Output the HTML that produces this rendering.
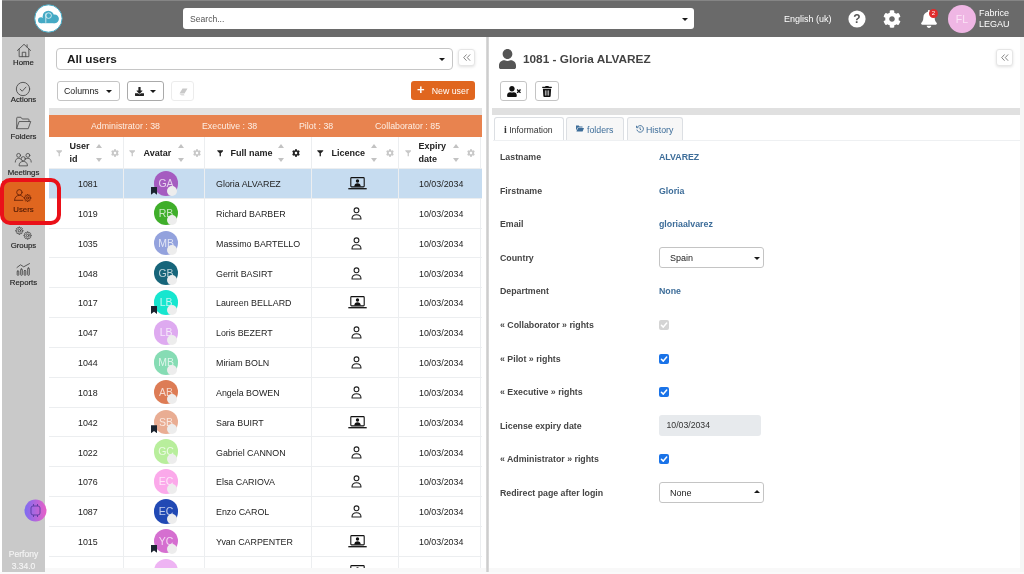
<!DOCTYPE html>
<html lang="en">
<head>
<meta charset="utf-8">
<title>Perfony - Users</title>
<style>
*{box-sizing:border-box;margin:0;padding:0}
html,body{width:1024px;height:574px;overflow:hidden;background:#fff}
body{position:relative;font-family:"Liberation Sans",Arial,sans-serif;color:#222;font-size:9px}
#wrap{position:absolute;left:0;top:0;width:1024px;height:574px;overflow:hidden;will-change:transform}
.abs{position:absolute}
#hdr{left:2px;top:0;width:1022px;height:37px;background:#6a6a6a;border-top:1px solid #858585}
#side{left:2px;top:37px;width:43px;height:535px;background:#c9c9c9}
#search{left:183px;top:8px;width:511px;height:21px;background:#fff;border-radius:3px}
#search span{position:absolute;left:7px;top:5.6px;font-size:8.6px;color:#555}
.caret{width:0;height:0;border-left:3.3px solid transparent;border-right:3.3px solid transparent;border-top:3.8px solid #1a1a1a;position:absolute}
.caretup{width:0;height:0;border-left:3.3px solid transparent;border-right:3.3px solid transparent;border-bottom:3.8px solid #1a1a1a;position:absolute}
.hw{position:absolute;color:#fff;font-size:9.5px;white-space:nowrap}
.nav{position:absolute;left:2px;width:43px;text-align:center;font-size:7.8px;color:#1e1e1e;-webkit-text-stroke:0.15px currentColor}
.btn{position:absolute;border:1px solid #c4c4c4;border-radius:3px;background:#fff}
.lbl{position:absolute;left:500px;font-weight:bold;font-size:8.8px;color:#454545;white-space:nowrap}
.val{position:absolute;left:659px;font-weight:bold;font-size:8.8px;color:#3d6d99;white-space:nowrap}
.th{position:absolute;top:137px;height:31px;border-right:1px solid #eceef0;font-weight:bold;font-size:9px;color:#222;line-height:13px}
.row{position:absolute;left:49px;width:433px;border-bottom:1px solid #eceef0;font-size:9px;color:#222}
.row .c{position:absolute;top:0;height:100%;border-right:1px solid #eceef0}
.row .t{position:absolute;white-space:nowrap}
.av{position:absolute;left:105px;width:24.5px;height:24.5px;border-radius:50%;color:rgba(255,255,255,.72);font-size:10.5px;text-align:center;line-height:24px}
.av i{position:absolute;left:13px;top:14.6px;width:10px;height:10px;border-radius:50%;background:#ededed;display:block}
.bm{position:absolute;left:101px;width:6px;height:8px;background:#1b2430;clip-path:polygon(0 0,100% 0,100% 100%,50% 72%,0 100%)}
.chk{position:absolute;left:659px;width:10px;height:10px;border-radius:2px;background:#1a73e8}
.chk svg{position:absolute;left:0;top:0}
.ic{position:absolute}
</style>
</head>
<body>
<div id="wrap">
<div id="hdr" class="abs"></div>
<svg class="ic" style="left:34px;top:4px" width="29" height="29" viewBox="0 0 29 29">
<circle cx="14.400" cy="14.500" r="13.700" fill="#fff" stroke="#45aac5" stroke-width="1"/>
<g fill="#45aac5"><circle cx="14.300" cy="12.300" r="5.600"/><circle cx="20.500" cy="14.800" r="4.400"/><circle cx="7" cy="16.200" r="3"/><rect x="7" y="14" width="13.500" height="5.200"/></g>
<circle cx="14.600" cy="11.600" r="2.800" fill="none" stroke="#fff" stroke-width="0.700"/>
<path d="M11.800 9.500v9.300" stroke="#fff" stroke-width="0.700"/>
</svg>
<div id="search" class="abs"><span>Search...</span><div class="caret" style="left:499px;top:9.5px"></div></div>
<div class="hw" style="left:784px;top:13.7px;font-size:9px">English (uk)</div>
<svg class="ic" style="left:848px;top:9.5px" width="18" height="18" viewBox="0 0 18 18"><circle cx="9" cy="9" r="8.6" fill="#fff"/>
<text x="9" y="13.2" text-anchor="middle" font-family="Liberation Sans, Arial, sans-serif" font-weight="bold" font-size="12" fill="#555">?</text></svg>
<svg class="ic" style="left:883px;top:9.5px" width="18" height="18" viewBox="0 0 512 512"><path fill="#fff" d="M487.4 315.7l-42.6-24.6c4.3-23.2 4.3-47 0-70.200l42.600-24.600c4.900-2.800 7.100-8.600 5.500-14-11.100-35.600-30-67.800-54.700-94.600-3.800-4.100-10-5.100-14.800-2.300L380.800 110c-17.900-15.400-38.500-27.300-60.800-35.100V25.800c0-5.600-3.900-10.500-9.400-11.700-36.700-8.200-74.300-7.800-109.200 0-5.500 1.200-9.400 6.100-9.400 11.700V75c-22.200 7.900-42.800 19.800-60.800 35.100L88.700 85.500c-4.900-2.800-11-1.900-14.800 2.300-24.700 26.700-43.600 58.900-54.700 94.600-1.700 5.400.6 11.200 5.500 14L67.300 221c-4.300 23.200-4.300 47 0 70.200l-42.600 24.600c-4.900 2.800-7.100 8.600-5.500 14 11.100 35.600 30 67.800 54.700 94.600 3.800 4.100 10 5.100 14.800 2.300l42.600-24.600c17.900 15.400 38.500 27.300 60.800 35.100v49.200c0 5.600 3.900 10.500 9.400 11.700 36.700 8.200 74.300 7.800 109.200 0 5.500-1.200 9.400-6.100 9.400-11.700v-49.200c22.200-7.900 42.800-19.800 60.800-35.100l42.600 24.600c4.900 2.800 11 1.900 14.800-2.300 24.700-26.700 43.600-58.900 54.700-94.600 1.500-5.500-.7-11.300-5.600-14.100zM256 336c-44.100 0-80-35.900-80-80s35.900-80 80-80 80 35.900 80 80-35.900 80-80 80z"/></svg>
<svg class="ic" style="left:921px;top:9.5px" width="16" height="18" viewBox="0 0 448 512"><path fill="#fff" d="M224 512c35.320 0 63.970-28.650 63.970-64H160.030c0 35.350 28.650 64 63.970 64zm215.390-149.710c-19.320-20.760-55.470-51.990-55.470-154.290 0-77.700-54.480-139.900-127.940-155.160V32c0-17.670-14.320-32-31.980-32s-31.980 14.330-31.980 32v20.840C118.560 68.100 64.080 130.300 64.080 208c0 102.300-36.150 133.530-55.470 154.290-6 6.450-8.660 14.160-8.610 21.710.11 16.400 12.980 32 32.100 32h383.800c19.120 0 32-15.600 32.100-32 .05-7.550-2.610-15.270-8.610-21.710z"/></svg>
<div class="abs" style="left:929px;top:9px;width:9px;height:9px;border-radius:50%;background:#e02c2c;color:#fff;font-size:6px;line-height:9px;text-align:center">2</div>
<div class="abs" style="left:948px;top:4.5px;width:28px;height:28px;border-radius:50%;background:#efb6e4;color:#fbe3f6;font-size:10.5px;line-height:28px;text-align:center">FL</div>
<div class="hw" style="left:979px;top:8px;font-size:9px;line-height:10.9px">Fabrice<br>LEGAU</div>
<div id="side" class="abs"></div>
<div class="abs" style="left:2px;top:181px;width:43px;height:40px;background:#e0661f"></div>
<svg class="ic" style="left:15.5px;top:43px" width="16" height="15" viewBox="0 0 18 17" stroke="#4a4a4a" stroke-width="1" fill="none" stroke-linecap="round" stroke-linejoin="round"><path d="M1.5 8.5L9 1.5l7.500 7"/><path d="M3.500 7v8.500h11V7"/><path d="M7 15.500v-5h4v5"/><path d="M12.500 2v2.500"/></svg>
<div class="nav" style="top:58.4px">Home</div>
<svg class="ic" style="left:15px;top:81.2px" width="16" height="16" viewBox="0 0 18 18" stroke="#4a4a4a" stroke-width="1" fill="none" stroke-linecap="round" stroke-linejoin="round"><circle cx="9" cy="9" r="7.500"/><path d="M5.800 9.200l2.300 2.300 4.200-4.600"/></svg>
<div class="nav" style="top:95px">Actions</div>
<svg class="ic" style="left:14.7px;top:116.3px" width="17" height="13.6" viewBox="0 0 20 16" stroke="#4a4a4a" stroke-width="1" fill="none" stroke-linecap="round" stroke-linejoin="round"><path d="M2 14.500V2.500a1 1 0 0 1 1-1h4l1.500 2h7a1 1 0 0 1 1 1v2"/><path d="M2 14.500l2.800-8h13.700l-2.800 8z"/></svg>
<div class="nav" style="top:131.5px">Folders</div>
<svg class="ic" style="left:14px;top:152.3px" width="18.5" height="14.3" viewBox="0 0 22 17" stroke="#4a4a4a" stroke-width="1" fill="none" stroke-linecap="round" stroke-linejoin="round"><circle cx="5.500" cy="4" r="2.300"/><circle cx="16.500" cy="4" r="2.300"/><circle cx="11" cy="8" r="2.500"/><path d="M1.500 12c0-3 1.800-4.500 4-4.500 1 0 1.900.3 2.600.9"/><path d="M20.500 12c0-3-1.800-4.500-4-4.500-1 0-1.900.3-2.600.9"/><path d="M6 16c0-3.200 2.200-4.800 5-4.800s5 1.600 5 4.800z"/></svg>
<div class="nav" style="top:168.2px">Meetings</div>
<svg class="ic" style="left:13.3px;top:187.2px" width="22" height="16" viewBox="0 0 22 16" fill="none" stroke="#6a2408" stroke-width="0.9" stroke-linecap="round" stroke-linejoin="round"><circle cx="6.4" cy="5.3" r="2.7"/><path d="M1.600 13.300c0-3.300 2-4.900 4.800-4.900 1.700 0 3.100.6 3.900 1.800M1.600 13.300h8.200"/><path d="M17.13 10.42 L18.06 10.49 L18.06 11.51 L17.13 11.58 L16.80 12.38 L17.41 13.08 L16.68 13.81 L15.98 13.20 L15.18 13.53 L15.11 14.46 L14.09 14.46 L14.02 13.53 L13.22 13.20 L12.52 13.81 L11.79 13.08 L12.40 12.38 L12.07 11.58 L11.14 11.51 L11.14 10.49 L12.07 10.42 L12.40 9.62 L11.79 8.92 L12.52 8.19 L13.22 8.80 L14.02 8.47 L14.09 7.54 L15.11 7.54 L15.18 8.47 L15.98 8.80 L16.68 8.19 L17.41 8.92 L16.80 9.62z"/><circle cx="14.600" cy="11" r="1.100"/></svg>
<div class="nav" style="top:204.8px;color:#4f1a05">Users</div>
<svg class="ic" style="left:13px;top:225px" width="22" height="16" viewBox="0 0 22 16" fill="none" stroke="#4a4a4a" stroke-width="0.9" stroke-linecap="round" stroke-linejoin="round"><path d="M9.03 5.10 L10.06 5.16 L10.06 6.24 L9.03 6.30 L8.69 7.13 L9.37 7.90 L8.60 8.67 L7.83 7.99 L7.00 8.33 L6.94 9.36 L5.86 9.36 L5.80 8.33 L4.97 7.99 L4.20 8.67 L3.43 7.90 L4.11 7.13 L3.77 6.30 L2.74 6.24 L2.74 5.16 L3.77 5.10 L4.11 4.27 L3.43 3.50 L4.20 2.73 L4.97 3.41 L5.80 3.07 L5.86 2.04 L6.94 2.04 L7.00 3.07 L7.83 3.41 L8.60 2.73 L9.37 3.50 L8.69 4.27z"/><circle cx="6.400" cy="5.700" r="1.200"/><path d="M17.23 9.90 L18.26 9.96 L18.26 11.04 L17.23 11.10 L16.89 11.93 L17.57 12.70 L16.80 13.47 L16.03 12.79 L15.20 13.13 L15.14 14.16 L14.06 14.16 L14.00 13.13 L13.17 12.79 L12.40 13.47 L11.63 12.70 L12.31 11.93 L11.97 11.10 L10.94 11.04 L10.94 9.96 L11.97 9.90 L12.31 9.07 L11.63 8.30 L12.40 7.53 L13.17 8.21 L14.00 7.87 L14.06 6.84 L15.14 6.84 L15.20 7.87 L16.03 8.21 L16.80 7.53 L17.57 8.30 L16.89 9.07z"/><circle cx="14.600" cy="10.500" r="1.200"/></svg>
<div class="nav" style="top:241.3px">Groups</div>
<svg class="ic" style="left:16px;top:263px" width="15" height="13" viewBox="0 0 15 13" fill="none" stroke="#4a4a4a" stroke-width="0.9" stroke-linecap="round" stroke-linejoin="round"><path d="M1 4.500l3.500-2.700 3.200 2L13.500 0.600"/><rect x="1.200" y="8" width="1.600" height="4.300" rx="0.600"/><rect x="4.700" y="6" width="1.600" height="6.300" rx="0.600"/><rect x="8.200" y="7.500" width="1.600" height="4.800" rx="0.600"/><rect x="11.700" y="5" width="1.600" height="7.300" rx="0.600"/></svg>
<div class="nav" style="top:277.8px">Reports</div>
<div class="abs" style="left:-0.5px;top:177.7px;width:61px;height:47.3px;border:4px solid #ea1019;border-radius:10px;z-index:50"></div>
<svg class="ic" style="left:24px;top:498.5px" width="23" height="23" viewBox="0 0 23 23"><defs><linearGradient id="pg" x1="0" y1="0" x2="1" y2="0"><stop offset="0" stop-color="#7c6cf2"/><stop offset="1" stop-color="#e860c8"/></linearGradient></defs><circle cx="11.500" cy="11.500" r="11" fill="url(#pg)"/><rect x="7" y="7" width="9" height="9" rx="2" fill="none" stroke="#5a3aa0" stroke-width="0.900"/><path d="M9.500 5v2M13.500 5v2M9.500 16v2M13.500 16v2" stroke="#5a3aa0" stroke-width="0.900"/></svg>
<div class="nav" style="top:547.5px;color:#f4f4f4;font-size:8.5px;line-height:12.4px">Perfony<br>3.34.0</div>
<div class="abs" style="left:56px;top:48px;width:397px;height:22px;border:1px solid #c6c6c6;border-radius:4px;background:#fff"><span style="position:absolute;left:10px;top:2.6px;font-size:11.8px;font-weight:bold;color:#1c1c1c">All users</span><div class="caret" style="left:382px;top:9px"></div></div>
<div class="abs" style="left:457.5px;top:48.5px;width:17px;height:17.5px;border:1px solid #e6e6e6;border-radius:3px;background:#fff;box-shadow:0 1px 3px rgba(0,0,0,.12)"><svg width="8" height="7.2" viewBox="0 0 9 8" style="position:absolute;left:4px;top:4.5px" fill="none" stroke="#666" stroke-width="0.900"><path d="M4 0.500L0.800 4 4 7.500M8 0.500L4.800 4 8 7.500"/></svg></div>
<div class="btn" style="left:56.5px;top:81px;width:63px;height:19.5px"><span style="position:absolute;left:6.5px;top:4.2px;font-size:8.8px;color:#222">Columns</span><div class="caret" style="left:48px;top:7.5px"></div></div>
<div class="btn" style="left:127px;top:81px;width:37px;height:19.5px;border-color:#aaa"><svg width="9" height="9" viewBox="0 0 512 512" style="position:absolute;left:7px;top:5px"><path fill="#222" d="M216 0h80c13.300 0 24 10.700 24 24v168h87.700c17.800 0 26.700 21.500 14.100 34.100L269.700 378.300c-7.500 7.500-19.800 7.500-27.300 0L90.100 226.100c-12.600-12.600-3.700-34.100 14.100-34.100H192V24c0-13.300 10.700-24 24-24zm296 376v112c0 13.300-10.700 24-24 24H24c-13.300 0-24-10.700-24-24V376c0-13.300 10.700-24 24-24h146.700l49 49c20.100 20.100 52.500 20.100 72.600 0l49-49H488c13.300 0 24 10.700 24 24z"/></svg><div class="caret" style="left:22px;top:8px"></div></div>
<div class="btn" style="left:171px;top:81px;width:23px;height:19.5px;border-color:#ececec"><svg width="9" height="8" viewBox="0 0 9 8" style="position:absolute;left:7px;top:6px"><path d="M3.500 0.500h5l-3 5h-5z" fill="#c9c9c9"/><path d="M0.500 6l2 1.500h3l-0.600-1.500z" fill="#dcdcdc"/></svg></div>
<div class="abs" style="left:411px;top:81px;width:64px;height:19.3px;border-radius:3px;background:#e0661f;color:#fff;font-size:9px"><span style="position:absolute;left:6px;top:1.2px;font-weight:bold;font-size:13px">+</span><span style="position:absolute;left:20.7px;top:4.8px;font-size:8.8px">New user</span></div>
<div class="abs" style="left:49px;top:108px;width:433px;height:7px;background:#e3e3e3"></div>
<div class="abs" style="left:49px;top:115px;width:433px;height:22px;background:#e8834f;color:#fff;font-size:9px"></div>
<div class="abs" style="left:91px;top:121px;color:#fdeee4;font-size:8.8px;white-space:nowrap">Administrator : 38</div>
<div class="abs" style="left:202px;top:121px;color:#fdeee4;font-size:8.8px;white-space:nowrap">Executive : 38</div>
<div class="abs" style="left:299px;top:121px;color:#fdeee4;font-size:8.8px;white-space:nowrap">Pilot : 38</div>
<div class="abs" style="left:375px;top:121px;color:#fdeee4;font-size:8.8px;white-space:nowrap">Collaborator : 85</div>
<div class="abs" style="left:49px;top:137px;width:433px;height:32px;background:#fff;border-bottom:1px solid #eceef0"></div>
<div class="abs" style="left:123px;top:137px;width:1px;height:31px;background:#eceef0"></div>
<div class="abs" style="left:204px;top:137px;width:1px;height:31px;background:#eceef0"></div>
<div class="abs" style="left:311px;top:137px;width:1px;height:31px;background:#eceef0"></div>
<div class="abs" style="left:398px;top:137px;width:1px;height:31px;background:#eceef0"></div>
<div class="abs" style="left:480px;top:137px;width:1px;height:31px;background:#eceef0"></div>
<div class="abs" style="left:69.5px;top:140px;font-weight:bold;font-size:9px;line-height:13px;color:#222;white-space:nowrap">User<br>id</div>
<svg class="ic" style="left:55.5px;top:150px" width="6.5" height="6.5" viewBox="0 0 7 7"><path d="M0.300 0.300h6.400v0.900L4.200 3.600v3.100H2.800V3.600L0.300 1.200z" fill="#c8c8c8"/></svg>
<div class="abs" style="left:95.5px;top:143.5px;width:0;height:0;border-left:3.7px solid transparent;border-right:3.7px solid transparent;border-bottom:4.3px solid #c2c2c2"></div><div class="abs" style="left:95.5px;top:157.7px;width:0;height:0;border-left:3.7px solid transparent;border-right:3.7px solid transparent;border-top:4.3px solid #c2c2c2"></div>
<svg class="ic" style="left:110.5px;top:149px" width="8" height="8" viewBox="0 0 512 512"><path fill="#c8c8c8" d="M487.4 315.7l-42.6-24.6c4.3-23.2 4.3-47 0-70.200l42.600-24.600c4.900-2.800 7.100-8.600 5.500-14-11.100-35.600-30-67.800-54.700-94.600-3.800-4.100-10-5.100-14.800-2.300L380.800 110c-17.900-15.400-38.500-27.300-60.800-35.100V25.800c0-5.600-3.900-10.500-9.400-11.700-36.700-8.200-74.300-7.800-109.200 0-5.500 1.200-9.400 6.100-9.400 11.700V75c-22.200 7.900-42.800 19.800-60.800 35.100L88.700 85.500c-4.900-2.800-11-1.900-14.800 2.300-24.700 26.700-43.600 58.900-54.700 94.600-1.700 5.400.6 11.200 5.500 14L67.300 221c-4.300 23.200-4.300 47 0 70.200l-42.600 24.600c-4.900 2.800-7.100 8.600-5.500 14 11.100 35.600 30 67.800 54.700 94.600 3.800 4.100 10 5.100 14.800 2.300l42.600-24.600c17.900 15.400 38.500 27.300 60.800 35.100v49.200c0 5.600 3.900 10.500 9.400 11.700 36.700 8.200 74.300 7.800 109.200 0 5.500-1.200 9.400-6.100 9.400-11.700v-49.200c22.200-7.900 42.800-19.800 60.800-35.100l42.600 24.600c4.900 2.800 11 1.900 14.800-2.300 24.700-26.700 43.600-58.900 54.700-94.600 1.500-5.500-.7-11.300-5.600-14.100zM256 336c-44.100 0-80-35.900-80-80s35.900-80 80-80 80 35.900 80 80-35.900 80-80 80z"/></svg>
<div class="abs" style="left:143.5px;top:147px;font-weight:bold;font-size:9px;line-height:13px;color:#222;white-space:nowrap">Avatar</div>
<svg class="ic" style="left:128.5px;top:150px" width="6.5" height="6.5" viewBox="0 0 7 7"><path d="M0.300 0.300h6.400v0.900L4.200 3.600v3.100H2.800V3.600L0.300 1.200z" fill="#c8c8c8"/></svg>
<div class="abs" style="left:177.5px;top:143.5px;width:0;height:0;border-left:3.7px solid transparent;border-right:3.7px solid transparent;border-bottom:4.3px solid #c2c2c2"></div><div class="abs" style="left:177.5px;top:157.7px;width:0;height:0;border-left:3.7px solid transparent;border-right:3.7px solid transparent;border-top:4.3px solid #c2c2c2"></div>
<svg class="ic" style="left:192.5px;top:149px" width="8" height="8" viewBox="0 0 512 512"><path fill="#c8c8c8" d="M487.4 315.7l-42.6-24.6c4.3-23.2 4.3-47 0-70.200l42.600-24.600c4.900-2.800 7.100-8.600 5.500-14-11.100-35.600-30-67.800-54.700-94.600-3.800-4.100-10-5.100-14.800-2.300L380.800 110c-17.900-15.400-38.500-27.300-60.800-35.100V25.800c0-5.600-3.900-10.500-9.400-11.700-36.700-8.200-74.300-7.800-109.200 0-5.500 1.200-9.400 6.100-9.400 11.700V75c-22.200 7.900-42.800 19.800-60.800 35.100L88.700 85.500c-4.900-2.800-11-1.900-14.800 2.300-24.700 26.700-43.600 58.900-54.700 94.600-1.700 5.400.6 11.200 5.500 14L67.300 221c-4.300 23.200-4.300 47 0 70.200l-42.600 24.600c-4.900 2.800-7.100 8.600-5.500 14 11.100 35.600 30 67.800 54.700 94.600 3.800 4.100 10 5.100 14.800 2.300l42.600-24.600c17.900 15.400 38.500 27.300 60.800 35.100v49.200c0 5.600 3.900 10.500 9.400 11.700 36.700 8.200 74.300 7.800 109.200 0 5.500-1.200 9.400-6.100 9.400-11.700v-49.200c22.200-7.900 42.800-19.800 60.800-35.100l42.600 24.600c4.900 2.800 11 1.900 14.800-2.300 24.700-26.700 43.600-58.900 54.700-94.600 1.500-5.500-.7-11.300-5.600-14.100zM256 336c-44.100 0-80-35.900-80-80s35.900-80 80-80 80 35.900 80 80-35.900 80-80 80z"/></svg>
<div class="abs" style="left:230.5px;top:147px;font-weight:bold;font-size:9px;line-height:13px;color:#222;white-space:nowrap">Full name</div>
<svg class="ic" style="left:216.5px;top:150px" width="6.5" height="6.5" viewBox="0 0 7 7"><path d="M0.300 0.300h6.400v0.900L4.200 3.600v3.100H2.800V3.600L0.300 1.200z" fill="#222"/></svg>
<div class="abs" style="left:277.5px;top:143.5px;width:0;height:0;border-left:3.7px solid transparent;border-right:3.7px solid transparent;border-bottom:4.3px solid #c2c2c2"></div><div class="abs" style="left:277.5px;top:157.7px;width:0;height:0;border-left:3.7px solid transparent;border-right:3.7px solid transparent;border-top:4.3px solid #c2c2c2"></div>
<svg class="ic" style="left:292px;top:149px" width="8" height="8" viewBox="0 0 512 512"><path fill="#222" d="M487.4 315.7l-42.6-24.6c4.3-23.2 4.3-47 0-70.200l42.600-24.600c4.900-2.800 7.100-8.600 5.500-14-11.100-35.600-30-67.800-54.700-94.600-3.800-4.100-10-5.100-14.800-2.300L380.800 110c-17.900-15.400-38.500-27.300-60.800-35.100V25.800c0-5.600-3.900-10.500-9.400-11.700-36.700-8.200-74.300-7.800-109.200 0-5.500 1.200-9.400 6.100-9.400 11.700V75c-22.200 7.900-42.800 19.800-60.800 35.100L88.700 85.500c-4.900-2.800-11-1.900-14.800 2.300-24.700 26.700-43.600 58.900-54.700 94.600-1.700 5.400.6 11.200 5.500 14L67.300 221c-4.300 23.200-4.300 47 0 70.200l-42.600 24.600c-4.900 2.800-7.100 8.600-5.500 14 11.100 35.600 30 67.800 54.700 94.600 3.800 4.100 10 5.100 14.800 2.300l42.600-24.600c17.900 15.400 38.500 27.300 60.800 35.100v49.200c0 5.600 3.900 10.500 9.400 11.700 36.700 8.200 74.300 7.800 109.200 0 5.500-1.200 9.400-6.100 9.400-11.700v-49.200c22.200-7.900 42.800-19.800 60.800-35.100l42.600 24.600c4.900 2.800 11 1.900 14.800-2.300 24.700-26.700 43.600-58.900 54.700-94.600 1.500-5.500-.7-11.300-5.600-14.100zM256 336c-44.100 0-80-35.900-80-80s35.900-80 80-80 80 35.900 80 80-35.900 80-80 80z"/></svg>
<div class="abs" style="left:331.5px;top:147px;font-weight:bold;font-size:9px;line-height:13px;color:#222;white-space:nowrap">Licence</div>
<svg class="ic" style="left:317px;top:150px" width="6.5" height="6.5" viewBox="0 0 7 7"><path d="M0.300 0.300h6.400v0.900L4.200 3.600v3.100H2.800V3.600L0.300 1.200z" fill="#222"/></svg>
<div class="abs" style="left:370.8px;top:143.5px;width:0;height:0;border-left:3.7px solid transparent;border-right:3.7px solid transparent;border-bottom:4.3px solid #c2c2c2"></div><div class="abs" style="left:370.8px;top:157.7px;width:0;height:0;border-left:3.7px solid transparent;border-right:3.7px solid transparent;border-top:4.3px solid #c2c2c2"></div>
<svg class="ic" style="left:386px;top:149px" width="8" height="8" viewBox="0 0 512 512"><path fill="#c8c8c8" d="M487.4 315.7l-42.6-24.6c4.3-23.2 4.3-47 0-70.200l42.600-24.600c4.900-2.800 7.100-8.600 5.500-14-11.100-35.600-30-67.800-54.700-94.600-3.800-4.100-10-5.100-14.800-2.300L380.800 110c-17.900-15.400-38.500-27.300-60.800-35.100V25.800c0-5.600-3.900-10.500-9.400-11.700-36.700-8.200-74.300-7.800-109.200 0-5.500 1.200-9.400 6.100-9.400 11.700V75c-22.200 7.900-42.800 19.800-60.800 35.100L88.700 85.500c-4.900-2.800-11-1.900-14.800 2.300-24.700 26.700-43.600 58.900-54.700 94.600-1.700 5.400.6 11.200 5.500 14L67.300 221c-4.300 23.200-4.300 47 0 70.200l-42.600 24.600c-4.900 2.800-7.100 8.600-5.500 14 11.100 35.600 30 67.800 54.700 94.600 3.800 4.100 10 5.100 14.800 2.300l42.600-24.600c17.900 15.400 38.500 27.300 60.800 35.100v49.200c0 5.600 3.900 10.500 9.400 11.700 36.700 8.200 74.300 7.800 109.200 0 5.500-1.200 9.400-6.100 9.400-11.700v-49.200c22.200-7.900 42.800-19.800 60.800-35.100l42.600 24.600c4.900 2.800 11 1.900 14.800-2.300 24.700-26.700 43.600-58.900 54.700-94.600 1.500-5.500-.7-11.300-5.600-14.100zM256 336c-44.100 0-80-35.900-80-80s35.900-80 80-80 80 35.900 80 80-35.900 80-80 80z"/></svg>
<div class="abs" style="left:418.5px;top:140px;font-weight:bold;font-size:9px;line-height:13px;color:#222;white-space:nowrap">Expiry<br>date</div>
<svg class="ic" style="left:404.5px;top:150px" width="6.5" height="6.5" viewBox="0 0 7 7"><path d="M0.300 0.300h6.400v0.900L4.200 3.600v3.100H2.800V3.600L0.300 1.200z" fill="#c8c8c8"/></svg>
<div class="abs" style="left:452.5px;top:143.5px;width:0;height:0;border-left:3.7px solid transparent;border-right:3.7px solid transparent;border-bottom:4.3px solid #c2c2c2"></div><div class="abs" style="left:452.5px;top:157.7px;width:0;height:0;border-left:3.7px solid transparent;border-right:3.7px solid transparent;border-top:4.3px solid #c2c2c2"></div>
<svg class="ic" style="left:467px;top:149px" width="8" height="8" viewBox="0 0 512 512"><path fill="#c8c8c8" d="M487.4 315.7l-42.6-24.6c4.3-23.2 4.3-47 0-70.200l42.600-24.600c4.900-2.800 7.100-8.600 5.500-14-11.100-35.600-30-67.800-54.700-94.600-3.800-4.100-10-5.100-14.800-2.300L380.800 110c-17.900-15.400-38.500-27.300-60.800-35.100V25.800c0-5.600-3.900-10.500-9.400-11.700-36.700-8.200-74.300-7.800-109.200 0-5.500 1.200-9.400 6.100-9.400 11.700V75c-22.200 7.900-42.800 19.800-60.800 35.100L88.700 85.500c-4.900-2.800-11-1.900-14.800 2.300-24.700 26.700-43.600 58.900-54.700 94.600-1.700 5.400.6 11.200 5.500 14L67.300 221c-4.300 23.200-4.300 47 0 70.200l-42.600 24.600c-4.900 2.800-7.100 8.600-5.500 14 11.100 35.600 30 67.800 54.700 94.600 3.800 4.100 10 5.100 14.800 2.300l42.600-24.600c17.900 15.400 38.500 27.300 60.800 35.100v49.200c0 5.600 3.900 10.500 9.400 11.700 36.700 8.200 74.300 7.800 109.200 0 5.500-1.200 9.400-6.100 9.400-11.700v-49.200c22.200-7.900 42.800-19.800 60.800-35.100l42.600 24.600c4.900 2.800 11 1.900 14.800-2.300 24.700-26.700 43.600-58.900 54.700-94.600 1.500-5.500-.7-11.300-5.600-14.100zM256 336c-44.100 0-80-35.900-80-80s35.900-80 80-80 80 35.900 80 80-35.900 80-80 80z"/></svg>
<div class="abs" style="left:49px;top:169.00px;width:433px;height:29.83px;background:#c6dcf0;border-bottom:1px solid #eceef0"></div>
<div class="abs" style="left:123px;top:169.00px;width:1px;height:29.83px;background:#eceef0"></div>
<div class="abs" style="left:204px;top:169.00px;width:1px;height:29.83px;background:#eceef0"></div>
<div class="abs" style="left:311px;top:169.00px;width:1px;height:29.83px;background:#eceef0"></div>
<div class="abs" style="left:398px;top:169.00px;width:1px;height:29.83px;background:#eceef0"></div>
<div class="abs" style="left:78px;top:179.11px;font-size:8.9px;color:#222">1081</div>
<div class="abs" style="left:216px;top:179.11px;font-size:8.9px;color:#222;white-space:nowrap">Gloria ALVAREZ</div>
<div class="abs" style="left:419px;top:179.11px;font-size:8.9px;color:#222">10/03/2034</div>
<div class="av" style="left:153.8px;top:171.01px;background:#a55cc0">GA<i></i></div>
<div class="bm" style="left:151px;top:186.71px"></div>
<svg class="ic" style="left:348px;top:177.11px" width="19" height="13" viewBox="0 0 19 13"><rect x="2.800" y="0.600" width="13.400" height="9.300" rx="0.800" fill="none" stroke="#111" stroke-width="1.100"/><circle cx="9.500" cy="4" r="1.700" fill="#111"/><path d="M6.300 9.500c0-2.200 1.400-3.200 3.200-3.200s3.200 1 3.200 3.200z" fill="#111"/><path d="M0.300 11.700h18.400" stroke="#111" stroke-width="1.300"/></svg>
<div class="abs" style="left:49px;top:198.83px;width:433px;height:29.83px;background:#fff;border-bottom:1px solid #eceef0"></div>
<div class="abs" style="left:123px;top:198.83px;width:1px;height:29.83px;background:#eceef0"></div>
<div class="abs" style="left:204px;top:198.83px;width:1px;height:29.83px;background:#eceef0"></div>
<div class="abs" style="left:311px;top:198.83px;width:1px;height:29.83px;background:#eceef0"></div>
<div class="abs" style="left:398px;top:198.83px;width:1px;height:29.83px;background:#eceef0"></div>
<div class="abs" style="left:480px;top:198.83px;width:1px;height:29.83px;background:#eceef0"></div>
<div class="abs" style="left:78px;top:208.94px;font-size:8.9px;color:#222">1019</div>
<div class="abs" style="left:216px;top:208.94px;font-size:8.9px;color:#222;white-space:nowrap">Richard BARBER</div>
<div class="abs" style="left:419px;top:208.94px;font-size:8.9px;color:#222">10/03/2034</div>
<div class="av" style="left:153.8px;top:200.84px;background:#3fae2a">RB<i></i></div>
<svg class="ic" style="left:351px;top:206.94px" width="11" height="13" viewBox="0 0 11 13" fill="none" stroke="#222" stroke-width="1.100"><circle cx="5.500" cy="3.300" r="2.400"/><path d="M1 12c0-3 1.800-4.300 4.500-4.300s4.500 1.300 4.500 4.300z" stroke-linejoin="round"/></svg>
<div class="abs" style="left:49px;top:228.66px;width:433px;height:29.83px;background:#fff;border-bottom:1px solid #eceef0"></div>
<div class="abs" style="left:123px;top:228.66px;width:1px;height:29.83px;background:#eceef0"></div>
<div class="abs" style="left:204px;top:228.66px;width:1px;height:29.83px;background:#eceef0"></div>
<div class="abs" style="left:311px;top:228.66px;width:1px;height:29.83px;background:#eceef0"></div>
<div class="abs" style="left:398px;top:228.66px;width:1px;height:29.83px;background:#eceef0"></div>
<div class="abs" style="left:480px;top:228.66px;width:1px;height:29.83px;background:#eceef0"></div>
<div class="abs" style="left:78px;top:238.77px;font-size:8.9px;color:#222">1035</div>
<div class="abs" style="left:216px;top:238.77px;font-size:8.9px;color:#222;white-space:nowrap">Massimo BARTELLO</div>
<div class="abs" style="left:419px;top:238.77px;font-size:8.9px;color:#222">10/03/2034</div>
<div class="av" style="left:153.8px;top:230.67px;background:#93a2dd">MB<i></i></div>
<svg class="ic" style="left:351px;top:236.77px" width="11" height="13" viewBox="0 0 11 13" fill="none" stroke="#222" stroke-width="1.100"><circle cx="5.500" cy="3.300" r="2.400"/><path d="M1 12c0-3 1.800-4.300 4.500-4.300s4.500 1.300 4.500 4.300z" stroke-linejoin="round"/></svg>
<div class="abs" style="left:49px;top:258.49px;width:433px;height:29.83px;background:#fff;border-bottom:1px solid #eceef0"></div>
<div class="abs" style="left:123px;top:258.49px;width:1px;height:29.83px;background:#eceef0"></div>
<div class="abs" style="left:204px;top:258.49px;width:1px;height:29.83px;background:#eceef0"></div>
<div class="abs" style="left:311px;top:258.49px;width:1px;height:29.83px;background:#eceef0"></div>
<div class="abs" style="left:398px;top:258.49px;width:1px;height:29.83px;background:#eceef0"></div>
<div class="abs" style="left:480px;top:258.49px;width:1px;height:29.83px;background:#eceef0"></div>
<div class="abs" style="left:78px;top:268.61px;font-size:8.9px;color:#222">1048</div>
<div class="abs" style="left:216px;top:268.61px;font-size:8.9px;color:#222;white-space:nowrap">Gerrit BASIRT</div>
<div class="abs" style="left:419px;top:268.61px;font-size:8.9px;color:#222">10/03/2034</div>
<div class="av" style="left:153.8px;top:260.50px;background:#17657a">GB<i></i></div>
<svg class="ic" style="left:351px;top:266.61px" width="11" height="13" viewBox="0 0 11 13" fill="none" stroke="#222" stroke-width="1.100"><circle cx="5.500" cy="3.300" r="2.400"/><path d="M1 12c0-3 1.800-4.300 4.500-4.300s4.500 1.300 4.500 4.300z" stroke-linejoin="round"/></svg>
<div class="abs" style="left:49px;top:288.32px;width:433px;height:29.83px;background:#fff;border-bottom:1px solid #eceef0"></div>
<div class="abs" style="left:123px;top:288.32px;width:1px;height:29.83px;background:#eceef0"></div>
<div class="abs" style="left:204px;top:288.32px;width:1px;height:29.83px;background:#eceef0"></div>
<div class="abs" style="left:311px;top:288.32px;width:1px;height:29.83px;background:#eceef0"></div>
<div class="abs" style="left:398px;top:288.32px;width:1px;height:29.83px;background:#eceef0"></div>
<div class="abs" style="left:480px;top:288.32px;width:1px;height:29.83px;background:#eceef0"></div>
<div class="abs" style="left:78px;top:298.44px;font-size:8.9px;color:#222">1017</div>
<div class="abs" style="left:216px;top:298.44px;font-size:8.9px;color:#222;white-space:nowrap">Laureen BELLARD</div>
<div class="abs" style="left:419px;top:298.44px;font-size:8.9px;color:#222">10/03/2034</div>
<div class="av" style="left:153.8px;top:290.33px;background:#17e6cf">LB<i></i></div>
<div class="bm" style="left:151px;top:306.04px"></div>
<svg class="ic" style="left:348px;top:296.44px" width="19" height="13" viewBox="0 0 19 13"><rect x="2.800" y="0.600" width="13.400" height="9.300" rx="0.800" fill="none" stroke="#111" stroke-width="1.100"/><circle cx="9.500" cy="4" r="1.700" fill="#111"/><path d="M6.300 9.500c0-2.200 1.400-3.200 3.200-3.200s3.200 1 3.200 3.200z" fill="#111"/><path d="M0.300 11.700h18.400" stroke="#111" stroke-width="1.300"/></svg>
<div class="abs" style="left:49px;top:318.15px;width:433px;height:29.83px;background:#fff;border-bottom:1px solid #eceef0"></div>
<div class="abs" style="left:123px;top:318.15px;width:1px;height:29.83px;background:#eceef0"></div>
<div class="abs" style="left:204px;top:318.15px;width:1px;height:29.83px;background:#eceef0"></div>
<div class="abs" style="left:311px;top:318.15px;width:1px;height:29.83px;background:#eceef0"></div>
<div class="abs" style="left:398px;top:318.15px;width:1px;height:29.83px;background:#eceef0"></div>
<div class="abs" style="left:480px;top:318.15px;width:1px;height:29.83px;background:#eceef0"></div>
<div class="abs" style="left:78px;top:328.26px;font-size:8.9px;color:#222">1047</div>
<div class="abs" style="left:216px;top:328.26px;font-size:8.9px;color:#222;white-space:nowrap">Loris BEZERT</div>
<div class="abs" style="left:419px;top:328.26px;font-size:8.9px;color:#222">10/03/2034</div>
<div class="av" style="left:153.8px;top:320.16px;background:#deaaf0">LB<i></i></div>
<svg class="ic" style="left:351px;top:326.26px" width="11" height="13" viewBox="0 0 11 13" fill="none" stroke="#222" stroke-width="1.100"><circle cx="5.500" cy="3.300" r="2.400"/><path d="M1 12c0-3 1.800-4.300 4.500-4.300s4.500 1.300 4.500 4.300z" stroke-linejoin="round"/></svg>
<div class="abs" style="left:49px;top:347.98px;width:433px;height:29.83px;background:#fff;border-bottom:1px solid #eceef0"></div>
<div class="abs" style="left:123px;top:347.98px;width:1px;height:29.83px;background:#eceef0"></div>
<div class="abs" style="left:204px;top:347.98px;width:1px;height:29.83px;background:#eceef0"></div>
<div class="abs" style="left:311px;top:347.98px;width:1px;height:29.83px;background:#eceef0"></div>
<div class="abs" style="left:398px;top:347.98px;width:1px;height:29.83px;background:#eceef0"></div>
<div class="abs" style="left:480px;top:347.98px;width:1px;height:29.83px;background:#eceef0"></div>
<div class="abs" style="left:78px;top:358.10px;font-size:8.9px;color:#222">1044</div>
<div class="abs" style="left:216px;top:358.10px;font-size:8.9px;color:#222;white-space:nowrap">Miriam BOLN</div>
<div class="abs" style="left:419px;top:358.10px;font-size:8.9px;color:#222">10/03/2034</div>
<div class="av" style="left:153.8px;top:350.00px;background:#86dcb4">MB<i></i></div>
<svg class="ic" style="left:351px;top:356.10px" width="11" height="13" viewBox="0 0 11 13" fill="none" stroke="#222" stroke-width="1.100"><circle cx="5.500" cy="3.300" r="2.400"/><path d="M1 12c0-3 1.800-4.300 4.500-4.300s4.500 1.300 4.500 4.300z" stroke-linejoin="round"/></svg>
<div class="abs" style="left:49px;top:377.81px;width:433px;height:29.83px;background:#fff;border-bottom:1px solid #eceef0"></div>
<div class="abs" style="left:123px;top:377.81px;width:1px;height:29.83px;background:#eceef0"></div>
<div class="abs" style="left:204px;top:377.81px;width:1px;height:29.83px;background:#eceef0"></div>
<div class="abs" style="left:311px;top:377.81px;width:1px;height:29.83px;background:#eceef0"></div>
<div class="abs" style="left:398px;top:377.81px;width:1px;height:29.83px;background:#eceef0"></div>
<div class="abs" style="left:480px;top:377.81px;width:1px;height:29.83px;background:#eceef0"></div>
<div class="abs" style="left:78px;top:387.93px;font-size:8.9px;color:#222">1018</div>
<div class="abs" style="left:216px;top:387.93px;font-size:8.9px;color:#222;white-space:nowrap">Angela BOWEN</div>
<div class="abs" style="left:419px;top:387.93px;font-size:8.9px;color:#222">10/03/2034</div>
<div class="av" style="left:153.8px;top:379.82px;background:#dd7c55">AB<i></i></div>
<svg class="ic" style="left:351px;top:385.93px" width="11" height="13" viewBox="0 0 11 13" fill="none" stroke="#222" stroke-width="1.100"><circle cx="5.500" cy="3.300" r="2.400"/><path d="M1 12c0-3 1.800-4.300 4.500-4.300s4.500 1.300 4.500 4.300z" stroke-linejoin="round"/></svg>
<div class="abs" style="left:49px;top:407.64px;width:433px;height:29.83px;background:#fff;border-bottom:1px solid #eceef0"></div>
<div class="abs" style="left:123px;top:407.64px;width:1px;height:29.83px;background:#eceef0"></div>
<div class="abs" style="left:204px;top:407.64px;width:1px;height:29.83px;background:#eceef0"></div>
<div class="abs" style="left:311px;top:407.64px;width:1px;height:29.83px;background:#eceef0"></div>
<div class="abs" style="left:398px;top:407.64px;width:1px;height:29.83px;background:#eceef0"></div>
<div class="abs" style="left:480px;top:407.64px;width:1px;height:29.83px;background:#eceef0"></div>
<div class="abs" style="left:78px;top:417.75px;font-size:8.9px;color:#222">1042</div>
<div class="abs" style="left:216px;top:417.75px;font-size:8.9px;color:#222;white-space:nowrap">Sara BUIRT</div>
<div class="abs" style="left:419px;top:417.75px;font-size:8.9px;color:#222">10/03/2034</div>
<div class="av" style="left:153.8px;top:409.65px;background:#e9ad93">SB<i></i></div>
<div class="bm" style="left:151px;top:425.36px"></div>
<svg class="ic" style="left:348px;top:415.75px" width="19" height="13" viewBox="0 0 19 13"><rect x="2.800" y="0.600" width="13.400" height="9.300" rx="0.800" fill="none" stroke="#111" stroke-width="1.100"/><circle cx="9.500" cy="4" r="1.700" fill="#111"/><path d="M6.300 9.500c0-2.200 1.400-3.200 3.200-3.200s3.200 1 3.200 3.200z" fill="#111"/><path d="M0.300 11.700h18.400" stroke="#111" stroke-width="1.300"/></svg>
<div class="abs" style="left:49px;top:437.47px;width:433px;height:29.83px;background:#fff;border-bottom:1px solid #eceef0"></div>
<div class="abs" style="left:123px;top:437.47px;width:1px;height:29.83px;background:#eceef0"></div>
<div class="abs" style="left:204px;top:437.47px;width:1px;height:29.83px;background:#eceef0"></div>
<div class="abs" style="left:311px;top:437.47px;width:1px;height:29.83px;background:#eceef0"></div>
<div class="abs" style="left:398px;top:437.47px;width:1px;height:29.83px;background:#eceef0"></div>
<div class="abs" style="left:480px;top:437.47px;width:1px;height:29.83px;background:#eceef0"></div>
<div class="abs" style="left:78px;top:447.58px;font-size:8.9px;color:#222">1022</div>
<div class="abs" style="left:216px;top:447.58px;font-size:8.9px;color:#222;white-space:nowrap">Gabriel CANNON</div>
<div class="abs" style="left:419px;top:447.58px;font-size:8.9px;color:#222">10/03/2034</div>
<div class="av" style="left:153.8px;top:439.48px;background:#b8ee9c">GC<i></i></div>
<svg class="ic" style="left:351px;top:445.58px" width="11" height="13" viewBox="0 0 11 13" fill="none" stroke="#222" stroke-width="1.100"><circle cx="5.500" cy="3.300" r="2.400"/><path d="M1 12c0-3 1.800-4.300 4.500-4.300s4.500 1.300 4.500 4.300z" stroke-linejoin="round"/></svg>
<div class="abs" style="left:49px;top:467.30px;width:433px;height:29.83px;background:#fff;border-bottom:1px solid #eceef0"></div>
<div class="abs" style="left:123px;top:467.30px;width:1px;height:29.83px;background:#eceef0"></div>
<div class="abs" style="left:204px;top:467.30px;width:1px;height:29.83px;background:#eceef0"></div>
<div class="abs" style="left:311px;top:467.30px;width:1px;height:29.83px;background:#eceef0"></div>
<div class="abs" style="left:398px;top:467.30px;width:1px;height:29.83px;background:#eceef0"></div>
<div class="abs" style="left:480px;top:467.30px;width:1px;height:29.83px;background:#eceef0"></div>
<div class="abs" style="left:78px;top:477.41px;font-size:8.9px;color:#222">1076</div>
<div class="abs" style="left:216px;top:477.41px;font-size:8.9px;color:#222;white-space:nowrap">Elsa CARIOVA</div>
<div class="abs" style="left:419px;top:477.41px;font-size:8.9px;color:#222">10/03/2034</div>
<div class="av" style="left:153.8px;top:469.31px;background:#fba9ea">EC<i></i></div>
<svg class="ic" style="left:351px;top:475.41px" width="11" height="13" viewBox="0 0 11 13" fill="none" stroke="#222" stroke-width="1.100"><circle cx="5.500" cy="3.300" r="2.400"/><path d="M1 12c0-3 1.800-4.300 4.500-4.300s4.500 1.300 4.500 4.300z" stroke-linejoin="round"/></svg>
<div class="abs" style="left:49px;top:497.13px;width:433px;height:29.83px;background:#fff;border-bottom:1px solid #eceef0"></div>
<div class="abs" style="left:123px;top:497.13px;width:1px;height:29.83px;background:#eceef0"></div>
<div class="abs" style="left:204px;top:497.13px;width:1px;height:29.83px;background:#eceef0"></div>
<div class="abs" style="left:311px;top:497.13px;width:1px;height:29.83px;background:#eceef0"></div>
<div class="abs" style="left:398px;top:497.13px;width:1px;height:29.83px;background:#eceef0"></div>
<div class="abs" style="left:480px;top:497.13px;width:1px;height:29.83px;background:#eceef0"></div>
<div class="abs" style="left:78px;top:507.25px;font-size:8.9px;color:#222">1087</div>
<div class="abs" style="left:216px;top:507.25px;font-size:8.9px;color:#222;white-space:nowrap">Enzo CAROL</div>
<div class="abs" style="left:419px;top:507.25px;font-size:8.9px;color:#222">10/03/2034</div>
<div class="av" style="left:153.8px;top:499.14px;background:#2149b4">EC<i></i></div>
<svg class="ic" style="left:351px;top:505.25px" width="11" height="13" viewBox="0 0 11 13" fill="none" stroke="#222" stroke-width="1.100"><circle cx="5.500" cy="3.300" r="2.400"/><path d="M1 12c0-3 1.800-4.300 4.500-4.300s4.500 1.300 4.500 4.300z" stroke-linejoin="round"/></svg>
<div class="abs" style="left:49px;top:526.96px;width:433px;height:29.83px;background:#fff;border-bottom:1px solid #eceef0"></div>
<div class="abs" style="left:123px;top:526.96px;width:1px;height:29.83px;background:#eceef0"></div>
<div class="abs" style="left:204px;top:526.96px;width:1px;height:29.83px;background:#eceef0"></div>
<div class="abs" style="left:311px;top:526.96px;width:1px;height:29.83px;background:#eceef0"></div>
<div class="abs" style="left:398px;top:526.96px;width:1px;height:29.83px;background:#eceef0"></div>
<div class="abs" style="left:480px;top:526.96px;width:1px;height:29.83px;background:#eceef0"></div>
<div class="abs" style="left:78px;top:537.08px;font-size:8.9px;color:#222">1015</div>
<div class="abs" style="left:216px;top:537.08px;font-size:8.9px;color:#222;white-space:nowrap">Yvan CARPENTER</div>
<div class="abs" style="left:419px;top:537.08px;font-size:8.9px;color:#222">10/03/2034</div>
<div class="av" style="left:153.8px;top:528.98px;background:#d56fd0">YC<i></i></div>
<div class="bm" style="left:151px;top:544.68px"></div>
<svg class="ic" style="left:348px;top:535.08px" width="19" height="13" viewBox="0 0 19 13"><rect x="2.800" y="0.600" width="13.400" height="9.300" rx="0.800" fill="none" stroke="#111" stroke-width="1.100"/><circle cx="9.500" cy="4" r="1.700" fill="#111"/><path d="M6.300 9.500c0-2.200 1.400-3.200 3.200-3.200s3.200 1 3.200 3.200z" fill="#111"/><path d="M0.300 11.700h18.400" stroke="#111" stroke-width="1.300"/></svg>
<div class="abs" style="left:49px;top:556.79px;width:433px;height:29.83px;background:#fff;border-bottom:1px solid #eceef0"></div>
<div class="abs" style="left:123px;top:556.79px;width:1px;height:29.83px;background:#eceef0"></div>
<div class="abs" style="left:204px;top:556.79px;width:1px;height:29.83px;background:#eceef0"></div>
<div class="abs" style="left:311px;top:556.79px;width:1px;height:29.83px;background:#eceef0"></div>
<div class="abs" style="left:398px;top:556.79px;width:1px;height:29.83px;background:#eceef0"></div>
<div class="abs" style="left:480px;top:556.79px;width:1px;height:29.83px;background:#eceef0"></div>
<div class="av" style="left:153.8px;top:558.80px;background:#eeb4f3"><i></i></div>
<svg class="ic" style="left:348px;top:564.90px" width="19" height="13" viewBox="0 0 19 13"><rect x="2.800" y="0.600" width="13.400" height="9.300" rx="0.800" fill="none" stroke="#111" stroke-width="1.100"/><circle cx="9.500" cy="4" r="1.700" fill="#111"/><path d="M6.300 9.500c0-2.200 1.400-3.200 3.200-3.200s3.200 1 3.200 3.200z" fill="#111"/><path d="M0.300 11.700h18.400" stroke="#111" stroke-width="1.300"/></svg>
<div class="abs" style="left:45px;top:568px;width:979px;height:6px;background:#f8f8f8"></div>
<div class="abs" style="left:485.5px;top:37px;width:3.5px;height:535px;background:linear-gradient(90deg,#e6e6e6 0,#cdcdcd 30%,#cdcdcd 70%,#e6e6e6 100%)"></div>
<svg class="ic" style="left:499px;top:49px" width="17" height="20" viewBox="0 0 448 512" preserveAspectRatio="none"><path fill="#555" d="M224 256c70.700 0 128-57.300 128-128S294.700 0 224 0 96 57.300 96 128s57.300 128 128 128zm89.600 32h-16.700c-22.200 10.200-46.900 16-72.900 16s-50.600-5.800-72.900-16h-16.700C60.200 288 0 348.200 0 422.400V464c0 26.500 21.500 48 48 48h352c26.500 0 48-21.500 48-48v-41.600c0-74.200-60.200-134.400-134.400-134.400z"/></svg>
<div class="abs" style="left:523px;top:51.8px;font-size:11.8px;font-weight:bold;color:#444;white-space:nowrap">1081 - Gloria ALVAREZ</div>
<div class="abs" style="left:995.5px;top:48.5px;width:17px;height:17.5px;border:1px solid #e6e6e6;border-radius:3px;background:#fff;box-shadow:0 1px 3px rgba(0,0,0,.12)"><svg width="8" height="7.2" viewBox="0 0 9 8" style="position:absolute;left:4px;top:4.5px" fill="none" stroke="#666" stroke-width="0.900"><path d="M4 0.500L0.800 4 4 7.500M8 0.500L4.800 4 8 7.500"/></svg></div>
<div class="btn" style="left:499.5px;top:81px;width:27.5px;height:19.5px"><svg width="14" height="11" viewBox="0 0 640 512" style="position:absolute;left:6px;top:4px"><path fill="#111" d="M589.600 240l45.600-45.600c6.300-6.300 6.300-16.500 0-22.800l-22.800-22.800c-6.300-6.300-16.500-6.300-22.800 0L544 194.400l-45.600-45.600c-6.300-6.300-16.500-6.300-22.800 0l-22.800 22.800c-6.300 6.300-6.300 16.500 0 22.800l45.600 45.600-45.600 45.600c-6.300 6.300-6.300 16.500 0 22.800l22.800 22.800c6.300 6.300 16.500 6.300 22.800 0l45.600-45.600 45.600 45.600c6.300 6.300 16.500 6.300 22.800 0l22.800-22.800c6.300-6.300 6.300-16.500 0-22.800L589.600 240zM224 256c70.700 0 128-57.300 128-128S294.700 0 224 0 96 57.300 96 128s57.300 128 128 128zm89.600 32h-16.700c-22.200 10.200-46.900 16-72.900 16s-50.600-5.800-72.900-16h-16.700C60.200 288 0 348.200 0 422.400V464c0 26.500 21.500 48 48 48h352c26.500 0 48-21.500 48-48v-41.600c0-74.200-60.200-134.400-134.400-134.400z"/></svg></div>
<div class="btn" style="left:534.5px;top:81px;width:24.5px;height:19.5px"><svg width="10" height="11" viewBox="0 0 448 512" style="position:absolute;left:6.5px;top:3.7px"><path fill="#111" d="M432 32H312l-9.400-18.700A24 24 0 0 0 281.100 0H166.800a23.720 23.720 0 0 0-21.400 13.300L136 32H16A16 16 0 0 0 0 48v32a16 16 0 0 0 16 16h416a16 16 0 0 0 16-16V48a16 16 0 0 0-16-16zM53.200 467a48 48 0 0 0 47.900 45h245.800a48 48 0 0 0 47.900-45L416 128H32zM288 208a16 16 0 0 1 32 0v224a16 16 0 0 1-32 0zm-80 0a16 16 0 0 1 32 0v224a16 16 0 0 1-32 0zm-80 0a16 16 0 0 1 32 0v224a16 16 0 0 1-32 0z"/></svg></div>
<div class="abs" style="left:492px;top:108px;width:528px;height:6.5px;background:#e0e0e0"></div>
<div class="abs" style="left:493px;top:139.5px;width:527px;height:1px;background:#eef0f2"></div>
<div class="abs" style="left:494px;top:117px;width:69.5px;height:23px;border:1px solid #dcdfe3;border-bottom:none;border-radius:3px 3px 0 0;background:#fff"><span style="position:absolute;left:9px;top:6.6px;font-size:8.7px;color:#333;white-space:nowrap"><b style="font-family:'Liberation Serif',serif;font-size:10px;line-height:8px">i</b> Information</span></div>
<div class="abs" style="left:566px;top:117px;width:58px;height:22.5px;border:1px solid #dcdfe3;border-bottom:none;border-radius:3px 3px 0 0;background:#f7f7f7"><svg width="8" height="7" viewBox="0 0 8 7" style="position:absolute;left:9px;top:7px"><path d="M0 0.500h2.800l0.700 0.900h3v1H1.700L0 5.500zM2 2.900h6L6.600 6.500H0.400z" fill="#3d6d99"/></svg><span style="position:absolute;left:20px;top:6.6px;font-size:8.8px;color:#3d6d99">folders</span></div>
<div class="abs" style="left:626.5px;top:117px;width:56.5px;height:22.5px;border:1px solid #dcdfe3;border-bottom:none;border-radius:3px 3px 0 0;background:#f7f7f7"><svg width="8" height="8" viewBox="0 0 8 8" style="position:absolute;left:8px;top:6.500px" fill="none" stroke="#3d6d99" stroke-width="0.900"><path d="M1.300 2.200A3.300 3.300 0 1 1 0.900 4.600"/><path d="M0.500 0.800v1.900h1.900" /><path d="M4 2.300v1.900l1.200 0.800"/></svg><span style="position:absolute;left:18.5px;top:6.6px;font-size:8.8px;color:#3d6d99">History</span></div>
<div class="lbl" style="top:152.25px">Lastname</div>
<div class="val" style="top:152.25px">ALVAREZ</div>
<div class="lbl" style="top:185.80px">Firstname</div>
<div class="val" style="top:185.80px">Gloria</div>
<div class="lbl" style="top:219.35px">Email</div>
<div class="val" style="top:219.35px">gloriaalvarez</div>
<div class="lbl" style="top:252.90px">Country</div>
<div class="lbl" style="top:286.45px">Department</div>
<div class="val" style="top:286.45px">None</div>
<div class="lbl" style="top:320.00px">« Collaborator » rights</div>
<div class="lbl" style="top:353.55px">« Pilot » rights</div>
<div class="lbl" style="top:387.10px">« Executive » rights</div>
<div class="lbl" style="top:420.65px">License expiry date</div>
<div class="lbl" style="top:454.20px">« Administrator » rights</div>
<div class="lbl" style="top:487.75px">Redirect page after login</div>
<div class="abs" style="left:659px;top:247px;width:105px;height:21px;border:1px solid #c4c4c4;border-radius:3px;background:#fff"><span style="position:absolute;left:10px;top:5px;font-size:9px;color:#222">Spain</span><div class="caret" style="left:94px;top:8.500px"></div></div>
<div class="chk" style="top:320px;background:#d4d4d4"><svg width="10" height="10" viewBox="0 0 10 10" fill="none" stroke="#fff" stroke-width="1.500" stroke-linecap="round" stroke-linejoin="round"><path d="M2.400 5.200l1.900 1.900 3.400-4"/></svg></div>
<div class="chk" style="top:353.500px"><svg width="10" height="10" viewBox="0 0 10 10" fill="none" stroke="#fff" stroke-width="1.500" stroke-linecap="round" stroke-linejoin="round"><path d="M2.400 5.200l1.900 1.900 3.400-4"/></svg></div>
<div class="chk" style="top:387px"><svg width="10" height="10" viewBox="0 0 10 10" fill="none" stroke="#fff" stroke-width="1.500" stroke-linecap="round" stroke-linejoin="round"><path d="M2.400 5.200l1.900 1.900 3.400-4"/></svg></div>
<div class="abs" style="left:659px;top:415px;width:102px;height:20.5px;border-radius:3px;background:#e7eaed"><span style="position:absolute;left:7.5px;top:5.3px;font-size:8.7px;color:#333">10/03/2034</span></div>
<div class="chk" style="top:454px"><svg width="10" height="10" viewBox="0 0 10 10" fill="none" stroke="#fff" stroke-width="1.500" stroke-linecap="round" stroke-linejoin="round"><path d="M2.400 5.200l1.900 1.900 3.400-4"/></svg></div>
<div class="abs" style="left:659px;top:482px;width:105px;height:21px;border:1px solid #c4c4c4;border-radius:3px;background:#fff"><span style="position:absolute;left:10px;top:5px;font-size:9px;color:#222">None</span><div class="caretup" style="left:94px;top:7px"></div></div>
<div class="abs" style="left:1020px;top:37px;width:4px;height:537px;background:#f6f6f6"></div>
<div class="abs" style="left:0;top:572px;width:1024px;height:2px;background:#fafafa"></div>
</div>
</body>
</html>
